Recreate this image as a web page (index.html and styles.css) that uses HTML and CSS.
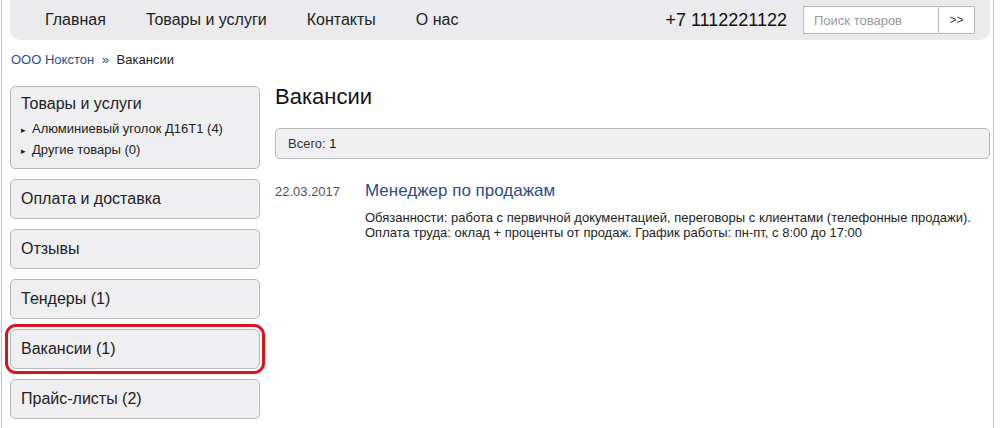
FILE: index.html
```html
<!DOCTYPE html>
<html lang="ru">
<head>
    <meta charset="UTF-8">
    <title>Вакансии</title>
    <link rel="stylesheet" href="styles.css">
</head>
<body>
    <div class="page">
        <div class="header">
            <ul class="nav">
                <li><a href="#">Главная</a></li>
                <li><a href="#">Товары и услуги</a></li>
                <li><a href="#">Контакты</a></li>
                <li><a href="#">О нас</a></li>
            </ul>
            <div class="phone">+7 1112221122</div>
            <form class="search">
                <input type="text" placeholder="Поиск товаров">
                <button type="button">&gt;&gt;</button>
            </form>
        </div>

        <div class="crumbs">
            <a href="#">ООО Нокстон</a> <span class="sep">»</span> <span>Вакансии</span>
        </div>

        <div class="layout">
            <div class="sidebar">
                <div class="box">
                    <div class="box-title">Товары и услуги</div>
                    <ul class="sub">
                        <li>Алюминиевый уголок Д16Т1 (4)</li>
                        <li>Другие товары (0)</li>
                    </ul>
                </div>
                <div class="box">Оплата и доставка</div>
                <div class="box">Отзывы</div>
                <div class="box">Тендеры (1)</div>
                <div class="box active">Вакансии (1)</div>
                <div class="box">Прайс-листы (2)</div>
            </div>

            <div class="content">
                <h1>Вакансии</h1>
                <div class="total">Всего: <b>1</b></div>

                <div class="vacancy">
                    <div class="date">22.03.2017</div>
                    <div class="info">
                        <a class="title" href="#">Менеджер по продажам</a>
                        <p>Обязанности: работа с первичной документацией, переговоры с клиентами (телефонные продажи).<br>
                        Оплата труда: оклад + проценты от продаж. График работы: пн-пт, с 8:00 до 17:00</p>
                    </div>
                </div>
            </div>
        </div>
    </div>
</body>
</html>
```

FILE: styles.css
```css
* {
    margin: 0;
    padding: 0;
    box-sizing: border-box;
}

body {
    font-family: "Liberation Sans", Arial, sans-serif;
    color: #222;
    background-color: white;
}

a {
    text-decoration: none;
}

.page {
    width: 993px;
    min-height: 428px;
    margin-left: 1px;
    padding: 0 3px 0 8px;
    border-left: 1px solid #c8c8c8;
    border-right: 1px solid #c8c8c8;
}

.header {
    display: flex;
    align-items: center;
    height: 40px;
    padding: 0 15px 0 35px;
    background-color: #ebebee;
    border-radius: 0 0 10px 10px;
}

.nav {
    display: flex;
    list-style: none;
    gap: 40px;
    flex: 1;
}

.nav a {
    font-size: 16px;
    color: #222;
}

.phone {
    font-size: 18px;
    color: #111;
    margin-right: 16px;
}

.search {
    display: flex;
    height: 28px;
}

.search input {
    width: 135px;
    height: 28px;
    padding: 0 10px;
    border: 1px solid #bbb;
    border-right: none;
    font-family: inherit;
    font-size: 13px;
    color: #222;
    background: white;
}

.search input::placeholder {
    color: #999;
}

.search button {
    width: 37px;
    height: 28px;
    border: 1px solid #bbb;
    background: white;
    font-family: inherit;
    font-size: 12px;
    color: #444;
}

.crumbs {
    font-size: 13px;
    padding: 12px 1px 0;
    height: 46px;
}

.crumbs a {
    color: #2e4a8c;
}

.crumbs .sep {
    color: #2e4a8c;
    margin: 0 4px;
}

.layout {
    display: flex;
    gap: 15px;
}

.sidebar {
    width: 250px;
    flex-shrink: 0;
    display: flex;
    flex-direction: column;
    gap: 10px;
}

.box {
    background-color: #efeff2;
    border: 1px solid #b8b8b8;
    border-radius: 5px;
    padding: 10px 10px 0;
    height: 40px;
    font-size: 16px;
    color: #222;
}

.box:first-child {
    height: 83px;
    padding-top: 8px;
}

.box.active {
    outline: 3px solid #d9141c;
    outline-offset: 2px;
    border-radius: 6px;
}

.sub {
    list-style: none;
    margin-top: 6px;
    font-size: 13px;
}

.sub li {
    line-height: 20px;
}

.sub li::before {
    content: "▸";
    font-size: 9px;
    margin-right: 6px;
}

.content {
    flex: 1;
}

h1 {
    font-size: 22px;
    font-weight: normal;
    color: #111;
    margin-top: -2px;
    margin-bottom: 18px;
}

.total {
    background-color: #efeff2;
    border: 1px solid #b8b8b8;
    border-radius: 5px;
    height: 31px;
    padding: 7px 12px 0;
    font-size: 13px;
    color: #333;
}

.total b {
    font-weight: normal;
    color: #111;
}

.vacancy {
    display: flex;
    margin-top: 22px;
}

.date {
    width: 90px;
    font-size: 13px;
    color: #555;
    padding-top: 3px;
}

.title {
    font-size: 17px;
    color: #2e4a8c;
}

.info p {
    margin-top: 9px;
    font-size: 13px;
    line-height: 15px;
    color: #222;
}
```
